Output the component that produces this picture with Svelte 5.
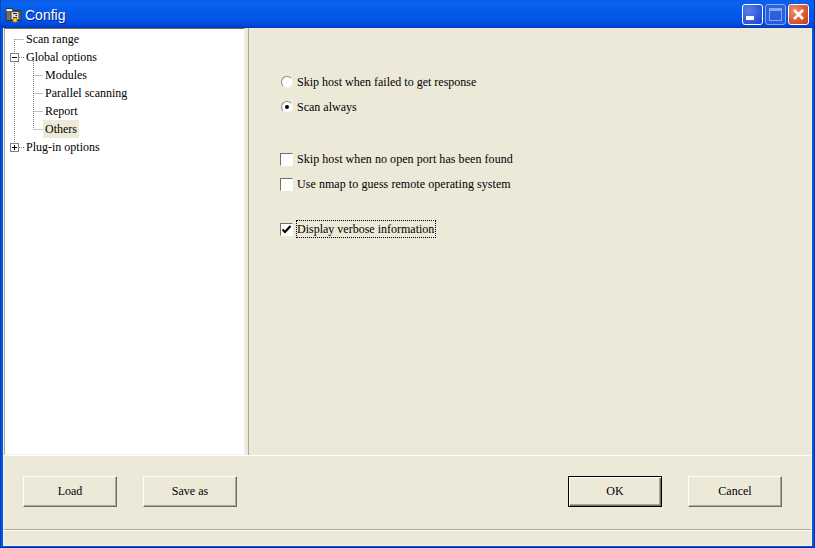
<script>
	const tree = [
		{ label: "Scan range", level: 0 },
		{ label: "Global options", level: 0, toggle: "minus" },
		{ label: "Modules", level: 1 },
		{ label: "Parallel scanning", level: 1 },
		{ label: "Report", level: 1 },
		{ label: "Others", level: 1, selected: true },
		{ label: "Plug-in options", level: 0, toggle: "plus" }
	];
</script>

<div class="window">
	<header class="titlebar">
		<svg class="appicon" width="17" height="17" viewBox="0 0 17 17">
			<path d="M1 2.5h6l1.500 2h7.500v10H1z" fill="#6f6f68" stroke="#34342f" />
			<path d="M1.500 3h5l1 2H1.500z" fill="#f0f0ea" />
			<rect x="6" y="5.500" width="8" height="8" fill="#dcdcd2" stroke="#4a4a44" />
			<path d="M8 7.500h4M10.500 9.500h1.500M8 11.500h4" stroke="#222" />
			<circle cx="10" cy="14" r="2.500" fill="#e6a010" />
			<circle cx="10" cy="14" r="1" fill="#f8e060" />
		</svg>
		<span class="title">Config</span>
		<div class="controls">
			<button class="ctl min" aria-label="Minimize"><i></i></button>
			<button class="ctl max" aria-label="Maximize"><i></i></button>
			<button class="ctl close" aria-label="Close">
				<svg width="13" height="13" viewBox="0 0 13 13"><path d="M2 2l9 9M11 2l-9 9" stroke="#fff" stroke-width="2.6" /></svg>
			</button>
		</div>
	</header>

	<div class="client">
		<div class="main">
			<aside class="tree">
				<svg class="lines" width="60" height="140">
					<g stroke="#808080" stroke-dasharray="1 1" fill="none">
						<path d="M9.500 10V118M9.500 10.500H19M14 28.500H19M14 118.500H19" />
						<path d="M28.500 28V100M28.500 46.500H38M28.500 64.500H38M28.500 82.500H38M28.500 100.500H38" />
					</g>
				</svg>
				{#each tree as row}
					<div class="row" class:sub={row.level === 1}>
						{#if row.toggle}
							<span class="toggle">
								<i class="h"></i>
								{#if row.toggle === "plus"}<i class="v"></i>{/if}
							</span>
						{/if}
						<span class="label" class:selected={row.selected}>{row.label}</span>
					</div>
				{/each}
			</aside>

			<section class="pane">
				<div class="group radios">
					<label class="opt"><span class="radio"></span>Skip host when failed to get response</label>
					<label class="opt"><span class="radio on"></span>Scan always</label>
				</div>
				<div class="group checks">
					<label class="opt"><span class="check"></span>Skip host when no open port has been found</label>
					<label class="opt"><span class="check"></span>Use nmap to guess remote operating system</label>
				</div>
				<div class="group last">
					<label class="opt">
						<span class="check">
							<svg width="11" height="11" viewBox="0 0 11 11"><path d="M1.500 5.500l2.500 2.500L9.500 2" fill="none" stroke="#000" stroke-width="2.200" /></svg>
						</span>
						<span class="focus">Display verbose information</span>
					</label>
				</div>
			</section>
		</div>

		<div class="buttons">
			<button class="btn">Load</button>
			<button class="btn">Save as</button>
			<span class="spacer"></span>
			<button class="btn default">OK</button>
			<button class="btn">Cancel</button>
		</div>
		<div class="status"></div>
	</div>
</div>

<style>
	:global(body) {
		margin: 0;
		background: #ece9d8;
	}

	.window {
		width: 815px;
		height: 548px;
		display: flex;
		flex-direction: column;
		box-sizing: border-box;
		overflow: hidden;
		background: #0855dd;
		border-left: 1px solid #0040c8;
		border-right: 1px solid #0030b0;
		border-bottom: 1px solid #0030b0;
		font-family: "Liberation Serif", serif;
		font-size: 12px;
		color: #000;
	}

	.titlebar {
		height: 28px;
		flex: none;
		display: flex;
		align-items: center;
		box-sizing: border-box;
		padding: 1px 3px 0 4px;
		background: linear-gradient(180deg, #0a5be0 0%, #0a62f0 8%, #0559e8 45%, #0255ea 70%, #0048d8 90%, #0338b8 100%);
	}

	.appicon {
		margin-right: 3px;
	}

	.title {
		color: #fff;
		font-family: "Liberation Sans", sans-serif;
		font-size: 14px;
		text-shadow: 1px 1px 0 #0a1f80;
	}

	.controls {
		margin-left: auto;
		display: flex;
		gap: 2px;
		margin-right: 2px;
	}

	.ctl {
		width: 21px;
		height: 21px;
		padding: 0;
		border: 1px solid #fff;
		border-radius: 3px;
		display: flex;
		align-items: center;
		justify-content: center;
		background: radial-gradient(circle at 30% 30%, #5a82ea, #2a52d8 70%, #2240c0);
	}

	.ctl.min {
		align-items: flex-end;
		justify-content: flex-start;
	}

	.ctl.min i {
		width: 8px;
		height: 4px;
		background: #fff;
		margin: 0 0 4px 3px;
	}

	.ctl.max {
		opacity: 0.72;
		border-color: #b8c8f0;
		background: #3a62dc;
	}

	.ctl.max i {
		width: 11px;
		height: 9px;
		border: 1px solid #b8c8f0;
		border-top-width: 3px;
		box-sizing: content-box;
	}

	.ctl.close {
		background: radial-gradient(circle at 30% 30%, #f0906a, #d8512a 65%, #c03a12);
	}

	.client {
		flex: 1;
		display: flex;
		flex-direction: column;
		margin: 0 2px 1px 2px;
		background: #ece9d8;
		min-height: 0;
		border-left: 1px solid #f4f3ea;
		border-right: 1px solid #f4f3ea;
		border-bottom: 1px solid #f4f3ea;
	}

	.main {
		height: 428px;
		flex: none;
		display: flex;
		border-bottom: 1px solid #fff;
		box-sizing: border-box;
	}

	.tree {
		position: relative;
		width: 241px;
		flex: none;
		box-sizing: border-box;
		background: #fff;
		border: 1px solid #f4f3ea;
		border-top-color: #716f64;
		border-left-color: #aca899;
		padding-top: 1px;
	}

	.lines {
		position: absolute;
		left: 0;
		top: 0;
	}

	.row {
		position: relative;
		height: 18px;
		display: flex;
		align-items: center;
		padding-left: 19px;
		white-space: nowrap;
	}

	.row.sub {
		padding-left: 38px;
	}

	.label {
		padding: 0 2px;
		line-height: 18px;
		position: relative;
	}

	.label.selected {
		background: #ece9d8;
	}

	.toggle {
		position: absolute;
		left: 5px;
		top: 5px;
		width: 9px;
		height: 9px;
		box-sizing: border-box;
		border: 1px solid #808080;
		background: #fff;
	}

	.toggle i {
		position: absolute;
		background: #000;
	}

	.toggle .h {
		left: 1px;
		top: 3px;
		width: 5px;
		height: 1px;
	}

	.toggle .v {
		left: 3px;
		top: 1px;
		width: 1px;
		height: 5px;
	}

	.pane {
		flex: 1;
		box-sizing: border-box;
		border-left: 1px solid #aca899;
		margin-left: 3px;
		padding: 45px 0 0 31px;
	}

	.group {
		display: flex;
		flex-direction: column;
		gap: 7px;
	}

	.checks {
		margin-top: 34px;
		letter-spacing: 0.06px;
	}

	.last {
		margin-top: 27px;
	}

	.opt {
		display: flex;
		align-items: center;
		height: 18px;
		white-space: nowrap;
	}

	.radio,
	.check {
		flex: none;
		margin-right: 4px;
		box-sizing: border-box;
		display: flex;
		align-items: center;
		justify-content: center;
	}

	.radio {
		width: 12px;
		height: 12px;
		margin-left: 1px;
		border-radius: 50%;
		background: #fff;
		border: 1px solid #8a8880;
		border-right-color: #f4f3ea;
		border-bottom-color: #f4f3ea;
	}

	.radio.on::after {
		content: "";
		width: 4px;
		height: 4px;
		border-radius: 50%;
		background: #000;
	}

	.check {
		width: 13px;
		height: 13px;
		background: #fff;
		border: 1px solid #aca899;
		border-top-color: #716f64;
		border-left-color: #716f64;
		border-right-color: #fff;
		border-bottom-color: #fff;
	}

	.focus {
		outline: 1px dotted #000;
		outline-offset: 0;
		line-height: 16px;
		padding: 0 1px 0 0;
	}

	.buttons {
		height: 74px;
		flex: none;
		box-sizing: border-box;
		display: flex;
		align-items: flex-start;
		padding: 20px 29px 0 19px;
		gap: 26px;
		border-bottom: 1px solid #aca899;
	}

	.spacer {
		flex: 1;
	}

	.btn {
		width: 94px;
		height: 31px;
		padding: 0;
		box-sizing: border-box;
		background: #ece9d8;
		border: 1px solid;
		border-color: #fff #716f64 #716f64 #fff;
		box-shadow: inset -1px -1px 0 #aca899;
		font: inherit;
		color: #000;
	}

	.btn.default {
		border: 1px solid #000;
		box-shadow: inset 1px 1px 0 #fff, inset -1px -1px 0 #716f64, inset -2px -2px 0 #aca899;
	}

	.status {
		flex: 1;
		border-top: 1px solid #fff;
	}
</style>
